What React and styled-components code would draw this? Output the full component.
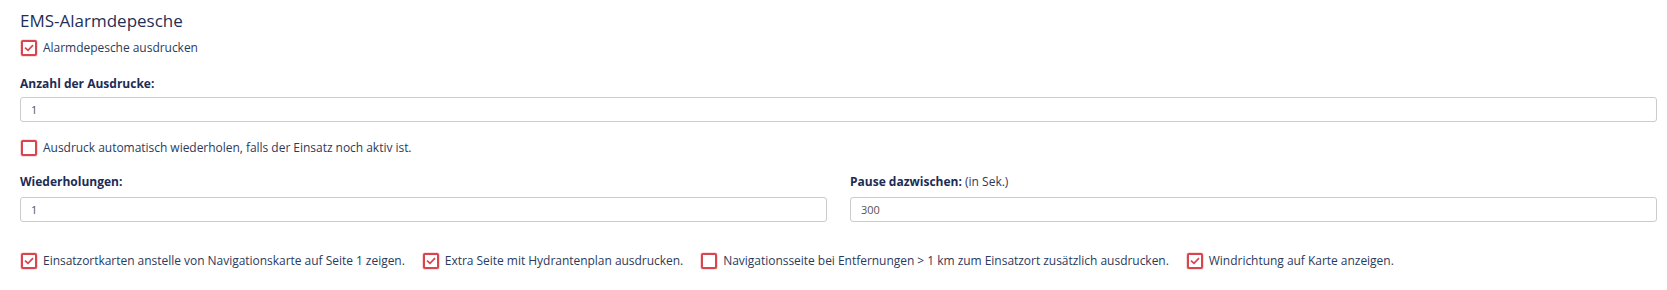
import React from 'react';
import styled, { createGlobalStyle } from 'styled-components';

const GlobalStyle = createGlobalStyle`
    body {
        margin: 0;
        background: #ffffff;
        font-family: "Open Sans", "Liberation Sans", sans-serif;
        color: #2b3a5c;
    }
`;

function CheckBox({ checked, label, inline }) {
    return (
        <CheckRow $inline={inline}>
            <Box $checked={checked}>
                {checked ? (
                    <svg width="10" height="8" viewBox="0 0 10 8">
                        <path d="M1 3.6 L4 6.4 L9 1.2" fill="none" stroke="#d8454f" strokeWidth="1.7" />
                    </svg>
                ) : null}
            </Box>
            <span>{label}</span>
        </CheckRow>
    );
}

function App() {
    return (
        <Page>
            <GlobalStyle />
            <Title>EMS-Alarmdepesche</Title>
            <Section $top="7px">
                <CheckBox checked label="Alarmdepesche ausdrucken" />
            </Section>

            <Label $top="19px">Anzahl der Ausdrucke:</Label>
            <Input defaultValue="1" $top="4px" />

            <Section $top="18px">
                <CheckBox label="Ausdruck automatisch wiederholen, falls der Einsatz noch aktiv ist." />
            </Section>

            <Columns>
                <Field>
                    <Label $top="0">Wiederholungen:</Label>
                    <Input defaultValue="1" $top="6px" />
                </Field>
                <Field>
                    <Label $top="0">Pause dazwischen: <Hint>(in Sek.)</Hint></Label>
                    <Input defaultValue="300" $top="6px" />
                </Field>
            </Columns>

            <Options>
                <CheckBox inline checked label="Einsatzortkarten anstelle von Navigationskarte auf Seite 1 zeigen." />
                <CheckBox inline checked label="Extra Seite mit Hydrantenplan ausdrucken." />
                <CheckBox inline label="Navigationsseite bei Entfernungen > 1 km zum Einsatzort zusätzlich ausdrucken." />
                <CheckBox inline checked label="Windrichtung auf Karte anzeigen." />
            </Options>
        </Page>
    );
}

export default App;

const Page = styled.div`
    padding: 9px 10px 20px 20px;
`;

const Title = styled.h3`
    margin: 0;
    font-size: 17px;
    font-weight: 400;
    line-height: 24px;
    color: #1f2f55;
`;

const Section = styled.div`
    margin-top: ${p => p.$top};
`;

const CheckRow = styled.label`
    display: ${p => p.$inline ? 'inline-flex' : 'flex'};
    align-items: center;
    gap: 6px;
    font-size: 12px;
    line-height: 16px;
    letter-spacing: -0.03px;
    color: #2b3a5c;
    margin-right: ${p => p.$inline ? '17px' : '0'};
    padding-left: 1px;
`;

const Box = styled.span`
    box-sizing: border-box;
    width: 16px;
    height: 16px;
    border: 2px solid #d8454f;
    border-radius: 2px;
    box-shadow: 0 0 0 0.6px rgba(216, 69, 79, 0.35);
    background: #fff;
    display: flex;
    align-items: center;
    justify-content: center;
    flex-shrink: 0;
`;

const Label = styled.div`
    margin-top: ${p => p.$top};
    font-size: 12px;
    font-weight: 700;
    line-height: 18px;
    color: #1c2c55;
`;

const Hint = styled.span`
    font-weight: 400;
    color: #2b3a5c;
`;

const Input = styled.input`
    display: block;
    box-sizing: border-box;
    width: 100%;
    height: 25px;
    margin-top: ${p => p.$top};
    padding: 0 10px;
    border: 1px solid #cccccc;
    border-radius: 3px;
    font-family: "Open Sans", "Liberation Sans", sans-serif;
    font-size: 11px;
    color: #555;
    background: #fff;
`;

const Columns = styled.div`
    display: grid;
    grid-template-columns: 1fr 1fr;
    column-gap: 23px;
    margin-top: 17px;
`;

const Field = styled.div`
    display: flex;
    flex-direction: column;
`;

const Options = styled.div`
    margin-top: 31px;
    display: flex;
    flex-wrap: wrap;
`;
